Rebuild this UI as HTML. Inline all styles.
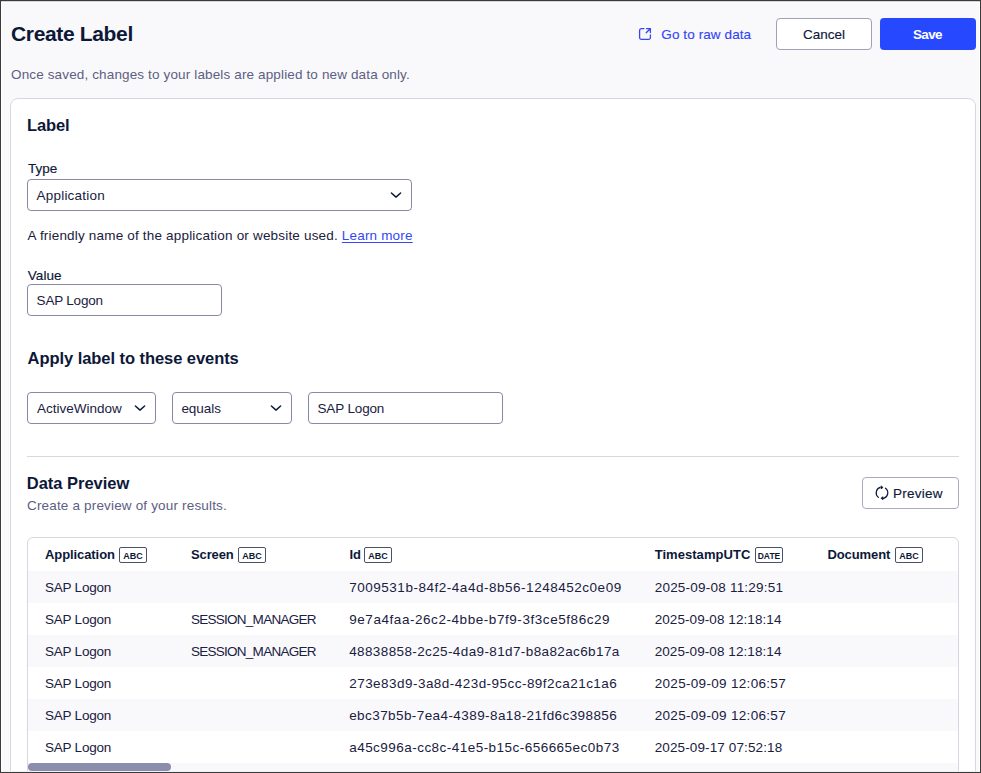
<!DOCTYPE html>
<html><head><meta charset="utf-8"><style>
html,body{margin:0;padding:0;}
body{width:981px;height:773px;overflow:hidden;position:relative;background:#f9f9fb;font-family:"Liberation Sans", sans-serif;}
.frame{position:absolute;left:0;top:0;width:979px;height:771px;border:1px solid #3b3b3b;z-index:50;pointer-events:none;box-shadow:inset 0 1px 0 #d2d2da, inset 0 2px 0 #ffffff, inset 1px 0 0 #ffffff, inset -1px 0 0 #ffffff, inset 0 -1px 0 #f0f0f4;}
.t{position:absolute;white-space:nowrap;z-index:10;}
.med{-webkit-text-stroke:0.15px currentColor;}
.box{position:absolute;box-sizing:border-box;}
.badge{position:absolute;box-sizing:content-box;height:13px;padding-top:1px;border:1px solid #4b5169;border-radius:2px;font-size:9px;line-height:14px;font-weight:700;color:#0d1838;text-align:center;z-index:10;}
</style></head><body>
<div class="frame"></div>
<div class="box" style="left:776px;top:18px;width:96px;height:32px;border:1px solid #9fa1b7;border-radius:4px;background:#fff"></div>
<div class="box" style="left:880px;top:18px;width:96px;height:32px;border-radius:4px;background:#2649ff"></div>
<svg width="14" height="14" viewBox="0 0 14 14" style="position:absolute;left:638px;top:27px"><path d="M6 1.6H3.4A1.8 1.8 0 0 0 1.6 3.4V10.6A1.8 1.8 0 0 0 3.4 12.4H10.6A1.8 1.8 0 0 0 12.4 10.6V8 M8.5 1.6H12.4V5.5 M8.2 5.8L12.2 1.8" fill="none" stroke="#3447f5" stroke-width="1.3" stroke-linecap="round" stroke-linejoin="round"/></svg>
<div class="box" style="left:10px;top:98px;width:966px;height:720px;border:1px solid #d7d7e1;border-radius:8px;background:#fff"></div>
<div class="box" style="left:27px;top:179px;width:385px;height:32px;border:1px solid #878aa6;border-radius:4px;background:#fff"></div>
<svg width="12" height="8" viewBox="0 0 12 8" style="position:absolute;left:389.5px;top:191px"><polyline points="1.4,2 6,6.1 10.6,2" fill="none" stroke="#0d1838" stroke-width="1.45" stroke-linecap="round" stroke-linejoin="round"/></svg>
<div class="box" style="left:27px;top:284px;width:195px;height:32px;border:1px solid #878aa6;border-radius:4px;background:#fff"></div>
<div class="box" style="left:27px;top:392px;width:129px;height:32px;border:1px solid #878aa6;border-radius:4px;background:#fff"></div>
<svg width="12" height="8" viewBox="0 0 12 8" style="position:absolute;left:133.5px;top:404px"><polyline points="1.4,2 6,6.1 10.6,2" fill="none" stroke="#0d1838" stroke-width="1.45" stroke-linecap="round" stroke-linejoin="round"/></svg>
<div class="box" style="left:172px;top:392px;width:120px;height:32px;border:1px solid #878aa6;border-radius:4px;background:#fff"></div>
<svg width="12" height="8" viewBox="0 0 12 8" style="position:absolute;left:269.5px;top:404px"><polyline points="1.4,2 6,6.1 10.6,2" fill="none" stroke="#0d1838" stroke-width="1.45" stroke-linecap="round" stroke-linejoin="round"/></svg>
<div class="box" style="left:308px;top:392px;width:195px;height:32px;border:1px solid #878aa6;border-radius:4px;background:#fff"></div>
<div class="box" style="left:27px;top:456px;width:932px;height:1px;background:#d7d7e1"></div>
<div class="box" style="left:862px;top:477px;width:97px;height:32px;border:1px solid #a9abbf;border-radius:4px;background:#fff"></div>
<svg width="16" height="16" viewBox="0 0 16 16" style="position:absolute;left:874.4px;top:485px"><path d="M6.11 2.32A5.8 5.8 0 0 0 4.43 12.37 M11.49 3.17A5.8 5.8 0 0 1 9.54 13.39" fill="none" stroke="#0d1838" stroke-width="1.2" stroke-linecap="round"/><path d="M7.0 0.9L7.0 3.9L9.1 2.4Z M9.0 11.7L9.0 14.7L6.9 13.2Z" fill="#0d1838" stroke="#0d1838" stroke-width="0.7" stroke-linejoin="round"/></svg>
<div class="box" style="left:27px;top:537px;width:932px;height:300px;border:1px solid #d7d7e1;border-radius:6px;background:#fff;overflow:hidden"></div>
<div style="position:absolute;left:28px;top:571px;width:930px;height:32px;background:#f9f9fc"></div>
<div style="position:absolute;left:28px;top:603px;width:930px;height:32px;background:#ffffff"></div>
<div style="position:absolute;left:28px;top:635px;width:930px;height:32px;background:#f9f9fc"></div>
<div style="position:absolute;left:28px;top:667px;width:930px;height:32px;background:#ffffff"></div>
<div style="position:absolute;left:28px;top:699px;width:930px;height:32px;background:#f9f9fc"></div>
<div style="position:absolute;left:28px;top:731px;width:930px;height:32px;background:#ffffff"></div>

<div class="box" style="left:28px;top:763px;width:930px;height:8px;background:#f9f9fb"></div>
<div class="box" style="left:28px;top:763px;width:143px;height:8px;border-radius:4px;background:#8a8dab"></div>
<div class="badge" style="left:119px;top:547px;width:26px;font-size:9px">ABC</div>
<div class="badge" style="left:238px;top:547px;width:26px;font-size:9px">ABC</div>
<div class="badge" style="left:364px;top:547px;width:26px;font-size:9px">ABC</div>
<div class="badge" style="left:755px;top:547px;width:26px;font-size:8.5px">DATE</div>
<div class="badge" style="left:895px;top:547px;width:26px;font-size:9px">ABC</div>

<div class="t" style="left:11.00px;top:23.00px;font-size:21px;line-height:21px;font-weight:700;color:#0d1838;letter-spacing:-0.347px;">Create Label</div>
<div class="t" style="left:11.00px;top:68.00px;font-size:13.5px;line-height:13.5px;font-weight:400;color:#5c6082;letter-spacing:0.139px;">Once saved, changes to your labels are applied to new data only.</div>
<div class="t" style="left:661.30px;top:28.00px;font-size:13.5px;line-height:13.5px;font-weight:400;color:#3447f5;letter-spacing:0.097px;-webkit-text-stroke:0.15px currentColor">Go to raw data</div>
<div class="t" style="left:803.00px;top:28.00px;font-size:13.5px;line-height:13.5px;font-weight:400;color:#0d1838;letter-spacing:-0.005px;-webkit-text-stroke:0.15px currentColor">Cancel</div>
<div class="t" style="left:913.00px;top:28.00px;font-size:13.5px;line-height:13.5px;font-weight:700;color:#ffffff;letter-spacing:-0.674px;">Save</div>
<div class="t" style="left:27.00px;top:117.00px;font-size:16.5px;line-height:16.5px;font-weight:700;color:#0d1838;letter-spacing:-0.128px;">Label</div>
<div class="t" style="left:28.00px;top:162.00px;font-size:13.5px;line-height:13.5px;font-weight:400;color:#0d1838;letter-spacing:-0.020px;-webkit-text-stroke:0.15px currentColor">Type</div>
<div class="t" style="left:36.50px;top:189.00px;font-size:13.5px;line-height:13.5px;font-weight:400;color:#1a2040;letter-spacing:0.216px;">Application</div>
<div class="t" style="left:27.50px;top:229.00px;font-size:13.5px;line-height:13.5px;font-weight:400;color:#1a2040;letter-spacing:0.186px;">A friendly name of the application or website used.</div>
<div class="t" style="left:341.80px;top:229.00px;font-size:13.5px;line-height:13.5px;font-weight:400;color:#3447f5;letter-spacing:0.186px;text-decoration:underline;text-underline-offset:1.5px">Learn more</div>
<div class="t" style="left:27.80px;top:269.00px;font-size:13.5px;line-height:13.5px;font-weight:400;color:#0d1838;letter-spacing:0.071px;-webkit-text-stroke:0.15px currentColor">Value</div>
<div class="t" style="left:36.60px;top:294.00px;font-size:13.5px;line-height:13.5px;font-weight:400;color:#1a2040;letter-spacing:-0.200px;">SAP Logon</div>
<div class="t" style="left:27.60px;top:350.00px;font-size:16.5px;line-height:16.5px;font-weight:700;color:#0d1838;letter-spacing:-0.060px;">Apply label to these events</div>
<div class="t" style="left:37.00px;top:402.00px;font-size:13.5px;line-height:13.5px;font-weight:400;color:#1a2040;letter-spacing:-0.003px;">ActiveWindow</div>
<div class="t" style="left:181.40px;top:402.00px;font-size:13.5px;line-height:13.5px;font-weight:400;color:#1a2040;letter-spacing:-0.046px;">equals</div>
<div class="t" style="left:317.50px;top:402.00px;font-size:13.5px;line-height:13.5px;font-weight:400;color:#1a2040;letter-spacing:-0.150px;">SAP Logon</div>
<div class="t" style="left:26.80px;top:475.00px;font-size:16.5px;line-height:16.5px;font-weight:700;color:#0d1838;letter-spacing:-0.026px;">Data Preview</div>
<div class="t" style="left:27.00px;top:499.00px;font-size:13.5px;line-height:13.5px;font-weight:400;color:#5c6082;letter-spacing:0.169px;">Create a preview of your results.</div>
<div class="t" style="left:893.00px;top:487.00px;font-size:13.5px;line-height:13.5px;font-weight:400;color:#0d1838;letter-spacing:0.239px;-webkit-text-stroke:0.15px currentColor">Preview</div>
<div class="t" style="left:45.00px;top:548.00px;font-size:13px;line-height:13px;font-weight:700;color:#0d1838;letter-spacing:-0.084px;">Application</div>
<div class="t" style="left:191.00px;top:548.00px;font-size:13px;line-height:13px;font-weight:700;color:#0d1838;letter-spacing:-0.124px;">Screen</div>
<div class="t" style="left:349.50px;top:548.00px;font-size:13px;line-height:13px;font-weight:700;color:#0d1838;letter-spacing:0.000px;">Id</div>
<div class="t" style="left:654.70px;top:548.00px;font-size:13px;line-height:13px;font-weight:700;color:#0d1838;letter-spacing:0.043px;">TimestampUTC</div>
<div class="t" style="left:827.50px;top:548.00px;font-size:13px;line-height:13px;font-weight:700;color:#0d1838;letter-spacing:-0.104px;">Document</div>
<div class="t" style="left:45.00px;top:581.00px;font-size:13.5px;line-height:13.5px;font-weight:400;color:#1a2040;letter-spacing:-0.225px;">SAP Logon</div>
<div class="t" style="left:349.20px;top:581.00px;font-size:13.5px;line-height:13.5px;font-weight:400;color:#1a2040;letter-spacing:0.522px;">7009531b-84f2-4a4d-8b56-1248452c0e09</div>
<div class="t" style="left:654.70px;top:581.00px;font-size:13.5px;line-height:13.5px;font-weight:400;color:#1a2040;letter-spacing:0.220px;">2025-09-08 11:29:51</div>
<div class="t" style="left:45.00px;top:613.00px;font-size:13.5px;line-height:13.5px;font-weight:400;color:#1a2040;letter-spacing:-0.225px;">SAP Logon</div>
<div class="t" style="left:191.00px;top:613.00px;font-size:13.5px;line-height:13.5px;font-weight:400;color:#1a2040;letter-spacing:-0.738px;">SESSION_MANAGER</div>
<div class="t" style="left:349.20px;top:613.00px;font-size:13.5px;line-height:13.5px;font-weight:400;color:#1a2040;letter-spacing:0.556px;">9e7a4faa-26c2-4bbe-b7f9-3f3ce5f86c29</div>
<div class="t" style="left:654.70px;top:613.00px;font-size:13.5px;line-height:13.5px;font-weight:400;color:#1a2040;letter-spacing:0.075px;">2025-09-08 12:18:14</div>
<div class="t" style="left:45.00px;top:645.00px;font-size:13.5px;line-height:13.5px;font-weight:400;color:#1a2040;letter-spacing:-0.225px;">SAP Logon</div>
<div class="t" style="left:191.00px;top:645.00px;font-size:13.5px;line-height:13.5px;font-weight:400;color:#1a2040;letter-spacing:-0.738px;">SESSION_MANAGER</div>
<div class="t" style="left:349.20px;top:645.00px;font-size:13.5px;line-height:13.5px;font-weight:400;color:#1a2040;letter-spacing:0.382px;">48838858-2c25-4da9-81d7-b8a82ac6b17a</div>
<div class="t" style="left:654.70px;top:645.00px;font-size:13.5px;line-height:13.5px;font-weight:400;color:#1a2040;letter-spacing:0.075px;">2025-09-08 12:18:14</div>
<div class="t" style="left:45.00px;top:677.00px;font-size:13.5px;line-height:13.5px;font-weight:400;color:#1a2040;letter-spacing:-0.225px;">SAP Logon</div>
<div class="t" style="left:349.20px;top:677.00px;font-size:13.5px;line-height:13.5px;font-weight:400;color:#1a2040;letter-spacing:0.462px;">273e83d9-3a8d-423d-95cc-89f2ca21c1a6</div>
<div class="t" style="left:654.70px;top:677.00px;font-size:13.5px;line-height:13.5px;font-weight:400;color:#1a2040;letter-spacing:0.314px;">2025-09-09 12:06:57</div>
<div class="t" style="left:45.00px;top:709.00px;font-size:13.5px;line-height:13.5px;font-weight:400;color:#1a2040;letter-spacing:-0.225px;">SAP Logon</div>
<div class="t" style="left:349.20px;top:709.00px;font-size:13.5px;line-height:13.5px;font-weight:400;color:#1a2040;letter-spacing:0.418px;">ebc37b5b-7ea4-4389-8a18-21fd6c398856</div>
<div class="t" style="left:654.70px;top:709.00px;font-size:13.5px;line-height:13.5px;font-weight:400;color:#1a2040;letter-spacing:0.314px;">2025-09-09 12:06:57</div>
<div class="t" style="left:45.00px;top:741.00px;font-size:13.5px;line-height:13.5px;font-weight:400;color:#1a2040;letter-spacing:-0.225px;">SAP Logon</div>
<div class="t" style="left:349.20px;top:741.00px;font-size:13.5px;line-height:13.5px;font-weight:400;color:#1a2040;letter-spacing:0.466px;">a45c996a-cc8c-41e5-b15c-656665ec0b73</div>
<div class="t" style="left:654.70px;top:741.00px;font-size:13.5px;line-height:13.5px;font-weight:400;color:#1a2040;letter-spacing:0.120px;">2025-09-17 07:52:18</div>
</body></html>
